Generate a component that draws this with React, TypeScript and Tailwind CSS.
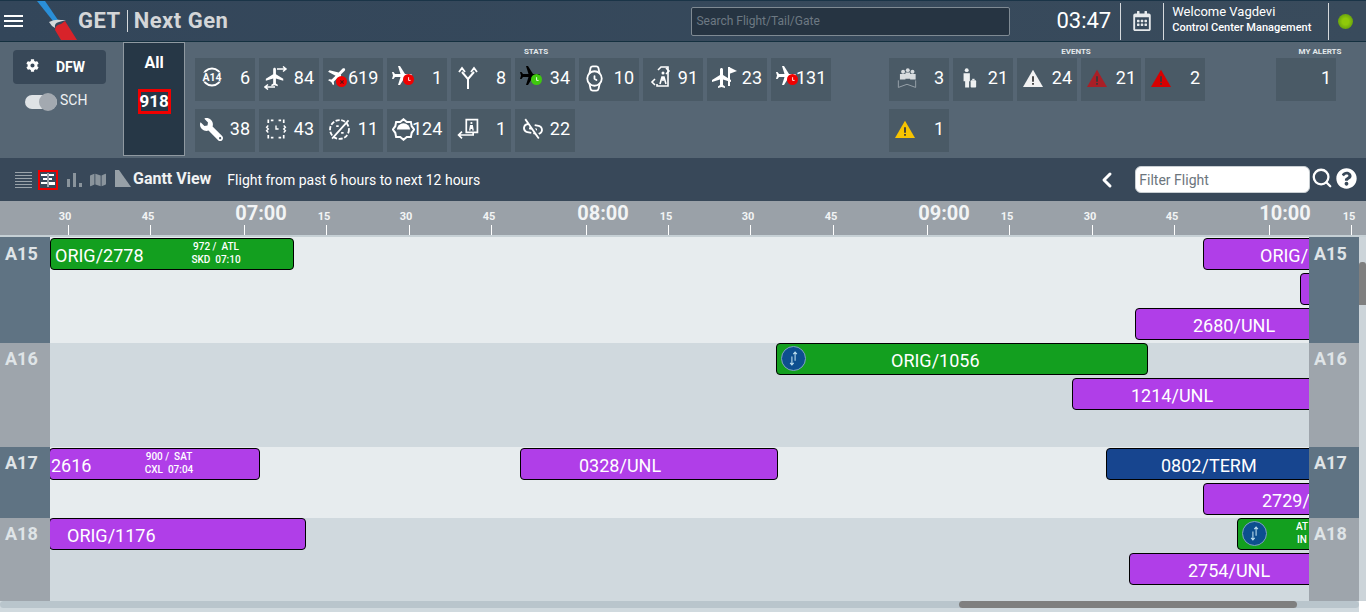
import React from "react";
import { FaCog, FaWrench, FaQuestionCircle, FaRegCalendarAlt, FaMap } from "react-icons/fa";
import { MdFlight, MdLinkOff } from "react-icons/md";
import { Watch, Search, ChevronLeft } from "lucide-react";

const Plane = ({ cls, rot, badge, pos, x }: { cls: string; rot: string; badge: string; pos: string; x?: boolean }) => (
  <span className="relative block w-[22px] h-[28px]">
    <MdFlight className={`${cls} ${rot} absolute left-[-2px] top-[0px] text-[24px]`} />
    <span className={`absolute w-[11px] h-[11px] rounded-full flex items-center justify-center ${badge} ${pos}`}>
      <svg viewBox="0 0 10 10" className="w-[8px] h-[8px]">
        {x ? <path d="M3 3l4 4M7 3l-4 4" stroke="#5a1010" strokeWidth="1.500" fill="none" /> : <path d="M4.500 1.500v4h2.500" stroke="#fff" strokeWidth="1.100" fill="none" />}
      </svg>
    </span>
  </span>
);

const S = ({ children, w = 28, cls = "" }: { children: React.ReactNode; w?: number; cls?: string }) => (
  <svg viewBox="0 0 28 28" width={w} height={w} fill="none" stroke="#fff" strokeWidth="1.6" className={cls}>{children}</svg>
);

const Tri = ({ cls }: { cls: string }) => (
  <svg viewBox="0 0 24 22" width="22" height="20" className={cls}>
    <path d="M12 2 23 21H1Z" fill="currentColor" />
    <path d="M11 9h2v6h-2zM11 16.500h2v2h-2z" fill="#3a3a3a" />
  </svg>
);

const icons: Record<string, React.ReactNode> = {
  a14: (
    <svg viewBox="0 0 24 20" width="24" height="20" className="mb-[2px]">
      <ellipse cx="12" cy="10" rx="9" ry="8.500" fill="none" stroke="#fff" strokeWidth="2" />
      <rect x="0" y="5.500" width="24" height="9" rx="3" fill="#4a5a66" />
      <text x="12" y="14" textAnchor="middle" fontSize="10.500" fontWeight="700" fill="#fff" fontFamily="Roboto">A14</text>
    </svg>
  ),
  swap: (
    <span className="relative block w-[24px] h-[24px]">
      <MdFlight className="absolute left-[0px] top-[0px] text-[22px] text-white" />
      <svg viewBox="0 0 24 24" className="absolute inset-0" fill="none" stroke="#fff" strokeWidth="1.500">
        <path d="M13 3h9M19 0.500 22 3l-3 2.500M11 21H1M4 18.500 1 21l3 2.500" />
      </svg>
    </span>
  ),
  cancel: <Plane cls="text-white" rot="rotate-[45deg]" badge="bg-[#f00000]" pos="left-[8px] top-[12px]" x />,
  late: <Plane cls="text-white" rot="rotate-90" badge="bg-[#f00000]" pos="left-[11px] top-[10px]" />,
  split: (
    <S>
      <path d="M12 25V15L6 8M12 15l6-7" strokeWidth="2" />
      <path d="M3 8l3-4 3 4M15 8l3-4 3 4" strokeWidth="1.800" />
    </S>
  ),
  ontime: <Plane cls="text-black" rot="rotate-90" badge="bg-[#3fc90f]" pos="left-[11px] top-[10px]" />,
  watch: <Watch size={29} color="#fff" strokeWidth={1.500} className="-ml-[4px]" />,
  exit: (
    <S>
      <path d="M10 6l3-3h7v19H9v-2" />
      <path d="M7 15l-3 3 3 3M18 4l3 3-3 3" />
      <circle cx="15" cy="9" r="1.500" fill="#fff" stroke="none" />
      <path d="M12 20l2-7h2l2 7M15 13v4" />
    </S>
  ),
  flag: (
    <span className="relative block w-[28px] h-[28px]">
      <MdFlight className="absolute left-[-2px] top-[2px] text-[24px] text-white" />
      <svg viewBox="0 0 28 28" className="absolute inset-0"><path d="M16 3h2v19h-2z" fill="#fff" /><path d="M17 3l8 4-8 3z" fill="#fff" /></svg>
    </span>
  ),
  wrench: <FaWrench size={23} color="#fff" className="-scale-x-100" />,
  route: (
    <S w={24}>
      <path d="M5 3v4M23 3v4M5 21v4M23 21v4M8 4h3M17 4h3M8 24h3M17 24h3" strokeWidth="2" />
      <path d="M5 10l-2 2 2 2-2 2 2 2M23 10l2 2-2 2 2 2-2 2" />
      <path d="M14 10v4h3" />
    </S>
  ),
  dash: (
    <S w={23}>
      <circle cx="14" cy="14" r="11.500" strokeDasharray="5 2" strokeWidth="2.200" />
      <path d="M25 3 5 25M10 10h3M16 18h3" strokeWidth="2.200" />
    </S>
  ),
  sun: (
    <S w={23}>
      <path d="M14 1.500l4 3.500h5l1 5 3 4-3 4-1 5h-5l-4 3.500-4-3.500H5l-1-5-3-4 3-4 1-5h5z" strokeWidth="2.400" />
      <path d="M6 14a8 7.500 0 0 1 16 0z" fill="#fff" stroke="none" />
    </S>
  ),
  back: (
    <S w={24}>
      <path d="M12 3h13v15H12z" strokeWidth="2" />
      <circle cx="18" cy="7" r="1.300" fill="#fff" stroke="none" />
      <path d="M16 16l1-6h2l1 6M18 10v4" />
      <path d="M20 18v3H3M7 17l-4 4 4 4" strokeWidth="2" />
    </S>
  ),
  unlink: <MdLinkOff size={24} color="#fff" className="ml-[1px] rotate-[10deg]" />,
  crowd: (
    <svg viewBox="0 0 28 28" width="22" height="22" className="ml-[2px]">
      <g fill="#d8dcdf">
        <circle cx="9" cy="6" r="2.500" /><circle cx="15" cy="4" r="2.500" /><circle cx="21" cy="6" r="2.500" />
        <path d="M5 9h7v7H5zM12 7h6v8h-6zM18 9h7v7h-7z" />
      </g>
      <path d="M3 17v9l11-4 11 4v-9" fill="none" stroke="#9aa4ab" strokeWidth="1.200" />
    </svg>
  ),
  bag: (
    <svg viewBox="0 0 28 28" width="22" height="22" fill="#eef0f1" className="ml-[4px]">
      <circle cx="6" cy="4" r="2.500" />
      <path d="M2 8h8v10H9v8H4v-8H2z" />
      <rect x="11" y="17" width="7" height="9" rx="1" />
      <path d="M13 15h3v2h-3z" />
    </svg>
  ),
  w1: <Tri cls="text-[#f2f2f2]" />,
  w2: <Tri cls="text-[#a91f26]" />,
  w3: <Tri cls="text-[#d80000]" />,
  w4: <Tri cls="text-[#f8c400]" />,
};

const Tile = ({ icon, n }: { icon?: string; n?: number }) => (
  <div className="w-[60px] h-[43px] bg-[#4a5a66] flex items-center justify-between pl-[5px] pr-[5px] pb-[3px]">
    <span className="w-[20px] h-[28px] shrink-0 flex items-center [&>*]:shrink-0">{icon ? icons[icon] : null}</span>
    <span className="text-[18px] leading-none text-white whitespace-nowrap">{n}</span>
  </div>
);

const Section = ({ title, w, items, ml }: { title: string; w: string; ml: string; items: [string, number][] }) => (
  <div className={`${w} ${ml} flex flex-col`}>
    <div className="h-[16px] flex items-end justify-center text-[8px] leading-[12px] font-bold text-[#e4e9ec]">{title}</div>
    <div className="flex flex-wrap gap-x-[4px] gap-y-[8px] content-start">
      {items.map(([i, n], k) => (
        <Tile key={k} icon={i} n={n} />
      ))}
    </div>
  </div>
);

const Swap = () => (
  <span className="w-[25px] h-[25px] rounded-full bg-[#0d4f8f] border border-[#7fa4bf] flex items-center justify-center shrink-0">
    <svg viewBox="0 0 16 16" width="17" height="17" fill="none" stroke="#bfe0ef" strokeWidth="1">
      <path d="M9.500 2v8M7.800 3.800 9.500 2l1.700 1.800M6.500 6v8M4.800 12.200 6.500 14l1.700-1.800" />
    </svg>
  </span>
);

type Bar = { l: number; r: number; t: number; c: "g" | "p" | "b"; text: string; tx?: number; sub?: [string, string, number]; swap?: boolean };
const C = { g: "bg-[#139f1f]", p: "bg-[#b03ee8]", b: "bg-[#17458f]" };

const Row = ({ name, h, bg, side, pt, bars }: { name: string; h: string; bg: string; side: string; pt: string; bars: Bar[] }) => (
  <div className={`flex ${h}`}>
    <div className={`w-[50px] shrink-0 ${side} pl-[5px] ${pt} text-[18px] leading-[24px] font-bold text-[#dfe4e7] z-10`}>{name}</div>
    <div className={`flex-1 relative overflow-hidden ${bg}`}>
      {bars.map((b, i) => (
        <div
          key={i}
          className={`absolute h-[32px] rounded-[4px] border border-black text-white ${C[b.c]}`}
          style={{ left: b.l - 50, width: b.r - b.l, top: b.t }}
        >
          {b.swap && <span className="absolute left-[4px] top-[2px]"><Swap /></span>}
          <span className="absolute top-[5px] text-[18px] leading-[24px] whitespace-nowrap" style={{ left: (b.tx ?? 0) - b.l }}>{b.text}</span>
          {b.sub && (
            <span className="absolute top-[1px] text-[10px] leading-[13px] font-medium text-center whitespace-pre -translate-x-1/2" style={{ left: b.sub[2] - b.l }}>
              {b.sub[0]}
              <br />
              {b.sub[1]}
            </span>
          )}
        </div>
      ))}
    </div>
    <div className={`w-[50px] shrink-0 ${side} pl-[5px] ${pt} text-[18px] leading-[24px] font-bold text-[#dfe4e7] z-10`}>{name}</div>
  </div>
);

const ticks: [number, number, string, boolean][] = [
  [67.5, 65, "30", false], [150, 148, "45", false], [244, 261, "07:00", true], [326, 324, "15", false], [409, 406, "30", false], [491, 489, "45", false],
  [586, 603, "08:00", true], [668, 666, "15", false], [750, 748, "30", false], [833, 831, "45", false], [927, 944, "09:00", true], [1009, 1007, "15", false],
  [1092, 1090, "30", false], [1174, 1172, "45", false], [1269, 1285, "10:00", true], [1351, 1349, "15", false],
];

export default function App() {
  return (
    <div className="w-[1366px] h-[612px] overflow-hidden flex flex-col bg-[#d0d9de] text-white" style={{ fontFamily: "Roboto, 'Liberation Sans', sans-serif" }}>
      {/* header */}
      <header className="h-[42px] shrink-0 flex items-center bg-gradient-to-r from-[#33465a] to-[#394b5c] border-t border-b border-t-[#1a3447] border-b-[#14303f]">
        <div className="ml-[4px] w-[19px] flex flex-col gap-[3px]">
          <span className="h-[2px] bg-white" /><span className="h-[2px] bg-white" /><span className="h-[2px] bg-white" />
        </div>
        <svg viewBox="0 0 42 40" width="42" height="40" className="ml-[13px] self-start shrink-0">
          <path d="M1 0h8l13 19-5 1z" fill="#2a8fd8" />
          <path d="M13 21q6-3 12-2l5 0-7 2q-5 1-4 6l-3-2z" fill="#d4d8da" />
          <path d="M19 29q0-5 6-6l4-3 12 19H25z" fill="#d8232a" />
        </svg>
        <span className="text-[22px] font-bold text-[#d4d6d8] tracking-[0.5px] -mt-[2px]">GET</span>
        <span className="w-px h-[22px] bg-[#d5d9dc] ml-[6px]" />
        <span className="text-[22px] font-bold text-[#d4d6d8] ml-[6px] tracking-[0.5px] -mt-[2px]">Next Gen</span>
        <div className="ml-[463px] w-[319px] h-[29px] bg-[#263442] border border-[#7f8a93] rounded-[2px] pl-[4px] pb-[1px] flex items-center text-[12px] text-[#6d7983]">Search Flight/Tail/Gate</div>
        <span className="ml-[46px] text-[22px] leading-none">03:47</span>
        <span className="ml-[9px] w-px h-[37px] bg-[#d5d9dc]" />
        <FaRegCalendarAlt size={20} color="#e6e9eb" className="ml-[11px]" />
        <span className="ml-[11px] w-px h-[37px] bg-[#d5d9dc]" />
        <div className="ml-[8px] w-[156px] flex flex-col -mt-[3px]">
          <span className="text-[13px] leading-[16px]">Welcome Vagdevi</span>
          <span className="text-[11px] leading-[14px] mt-[1px] whitespace-nowrap font-medium">Control Center Management</span>
        </div>
        <span className="w-px h-[37px] bg-[#d5d9dc]" />
        <span className="ml-[9px] w-[15px] h-[15px] rounded-full bg-[radial-gradient(circle,#8fc90a_30%,#4f8a10)]" />
      </header>

      {/* stats */}
      <section className="h-[116px] shrink-0 flex bg-[#566674]">
        <div className="w-[123px] shrink-0 pl-[13px] pt-[8px] flex flex-col">
          <div className="w-[93px] h-[34px] rounded-[4px] bg-[#384858] flex items-center pl-[13px]">
            <FaCog size={13} color="#fff" className="-mt-[4px]" />
            <span className="ml-[17px] text-[14px] font-bold">DFW</span>
          </div>
          <div className="flex items-center mt-[8px] ml-[12px]">
            <span className="relative w-[32px] h-[14px] rounded-full bg-[#dfe3e6]">
              <span className="absolute right-0 top-[-2px] w-[18px] h-[18px] rounded-full bg-[#a3a9b0]" />
            </span>
            <span className="ml-[3px] text-[14px] text-[#eef1f3] -mt-[2px]">SCH</span>
          </div>
        </div>
        <div className="w-[62px] h-[114px] shrink-0 bg-[#263746] border border-[#8f99a1] flex flex-col items-center">
          <span className="mt-[10px] text-[16px] leading-[20px] font-bold">All</span>
          <span className="mt-[16px] h-[25px] w-[33px] border-[3px] border-[#f00000] flex items-center justify-center text-[17px] font-bold">918</span>
        </div>
        <Section
          title="STATS" w="w-[682px]" ml="ml-[10px]"
          items={[["a14", 6], ["swap", 84], ["cancel", 619], ["late", 1], ["split", 8], ["ontime", 34], ["watch", 10], ["exit", 91], ["flag", 23], ["late", 131], ["wrench", 38], ["route", 43], ["dash", 11], ["sun", 124], ["back", 1], ["unlink", 22]]}
        />
        <Section
          title="EVENTS" w="w-[374px]" ml="ml-[12px]"
          items={[["crowd", 3], ["bag", 21], ["w1", 24], ["w2", 21], ["w3", 2], ["w4", 1]]}
        />
        <Section title="MY ALERTS" w="w-[88px]" ml="ml-[13px]" items={[["", 1]]} />
      </section>

      {/* toolbar */}
      <div className="h-[43px] shrink-0 flex items-center bg-[#384859]">
        <div className="ml-[15px] w-[17px] flex flex-col gap-[2px]">
          {[0, 1, 2, 3, 4, 5].map((i) => <span key={i} className="h-[1px] bg-[#9aa3aa]" />)}
        </div>
        <span className="ml-[6px] w-[20px] h-[20px] border-[2px] border-[#f00000] flex items-center justify-center">
          <svg viewBox="0 0 14 14" width="14" height="14" fill="#fff"><path d="M0 1h6v2H0zM8 1h5v2H8zM2 5h4v2H2zM8 5h3v2H8zM0 9h6v2H0zM8 9h6v3H8zM6.500 0h1v14h-1z" /></svg>
        </span>
        <svg viewBox="0 0 15 15" width="15" height="15" className="ml-[9px]" fill="#8a949c"><path d="M0 7h3v8H0zM6 1h3v14H6zM12 11h3v4h-3z" /></svg>
        <FaMap size={16} color="#8a949c" className="ml-[8px]" />
        <svg viewBox="0 0 16 17" width="16" height="17" className="ml-[9px] mb-[2px]" fill="#97a0a7"><path d="M0 0h4l12 17H0z" /></svg>
        <span className="ml-[2px] text-[16px] font-bold text-[#f0f2f3] mb-[2px]">Gantt View</span>
        <span className="ml-[16px] text-[14px] text-white mt-[2px]">Flight from past 6 hours to next 12 hours</span>
        <ChevronLeft size={24} color="#fff" strokeWidth={3} className="ml-[615px]" />
        <div className="ml-[16px] w-[175px] h-[27px] rounded-[6px] bg-white border border-[#c8ced2] pl-[3px] pt-[1px] flex items-center text-[14px] text-[#6c757d]">Filter Flight</div>
        <Search size={22} color="#fff" strokeWidth={2.500} className="ml-[1px] -mt-[3px]" />
        <FaQuestionCircle size={21} color="#fff" className="ml-[3px] -mt-[3px]" />
      </div>

      {/* ruler */}
      <div className="h-[36px] shrink-0 relative bg-[#9aa1a8] border-b-[2px] border-b-[#c6d0d5]">
        {ticks.map(([x, lx, t, big]) => (
          <React.Fragment key={t + x}>
            <span className="absolute top-[24px] h-[10px] w-px bg-white" style={{ left: x }} />
            <span
              className={big ? "absolute top-[0px] -translate-x-1/2 text-[20px] leading-[24px] font-bold text-[#f2f4f5]" : "absolute top-[9px] -translate-x-1/2 text-[11px] leading-[13px] font-bold text-[#f2f4f5]"}
              style={{ left: lx }}
            >
              {t}
            </span>
          </React.Fragment>
        ))}
      </div>

      {/* gantt */}
      <div className="flex-1 flex min-h-0">
        <div className="flex-1 flex flex-col min-w-0">
          <Row
            name="A15" h="h-[106px]" bg="bg-[#e7ecee]" side="bg-[#5f7383]" pt="pt-[5px]"
            bars={[
              { l: 50, r: 294, t: 1, c: "g", text: "ORIG/2778", tx: 54, sub: ["972 /  ATL", "SKD  07:10", 215] },
              { l: 1203, r: 1320, t: 1, c: "p", text: "ORIG/", tx: 1259 },
              { l: 1300, r: 1320, t: 36, c: "p", text: "" },
              { l: 1135, r: 1320, t: 71, c: "p", text: "2680/UNL", tx: 1192 },
            ]}
          />
          <Row
            name="A16" h="h-[104px]" bg="bg-[#d0d9de]" side="bg-[#9ea5ac]" pt="pt-[4px]"
            bars={[
              { l: 776, r: 1148, t: 0, c: "g", text: "ORIG/1056", tx: 890, swap: true },
              { l: 1072, r: 1320, t: 35, c: "p", text: "1214/UNL", tx: 1130 },
            ]}
          />
          <Row
            name="A17" h="h-[71px]" bg="bg-[#e7ecee]" side="bg-[#5f7383]" pt="pt-[4px]"
            bars={[
              { l: 49, r: 260, t: 1, c: "p", text: "2616", tx: 50, sub: ["900 /  SAT", "CXL  07:04", 168] },
              { l: 520, r: 778, t: 1, c: "p", text: "0328/UNL", tx: 578 },
              { l: 1106, r: 1320, t: 1, c: "b", text: "0802/TERM", tx: 1160 },
              { l: 1203, r: 1320, t: 36, c: "p", text: "2729/", tx: 1261 },
            ]}
          />
          <Row
            name="A18" h="h-[83px]" bg="bg-[#d0d9de]" side="bg-[#9ea5ac]" pt="pt-[4px]"
            bars={[
              { l: 49, r: 306, t: 0, c: "p", text: "ORIG/1176", tx: 66 },
              { l: 1237, r: 1320, t: 0, c: "g", text: "", swap: true, sub: ["AT", "IN", 1301] },
              { l: 1129, r: 1320, t: 35, c: "p", text: "2754/UNL", tx: 1187 },
            ]}
          />
          <div className="h-[11px] shrink-0 bg-[#d0d9de] flex items-start">
            <div className="w-full h-[7px] rounded-full bg-[#b9c5cc] flex">
              <span className="ml-[959px] w-[338px] h-[7px] rounded-full bg-[#7f7f7f]" />
            </div>
          </div>
        </div>
        <div className="w-[7px] shrink-0 bg-[#ccd4d9] flex flex-col">
          <span className="mt-[25px] h-[43px] bg-[#7f7f7f] rounded-t-[3px]" />
          <span className="flex-1" />
          <span className="h-[11px] bg-white" />
        </div>
      </div>
    </div>
  );
}
